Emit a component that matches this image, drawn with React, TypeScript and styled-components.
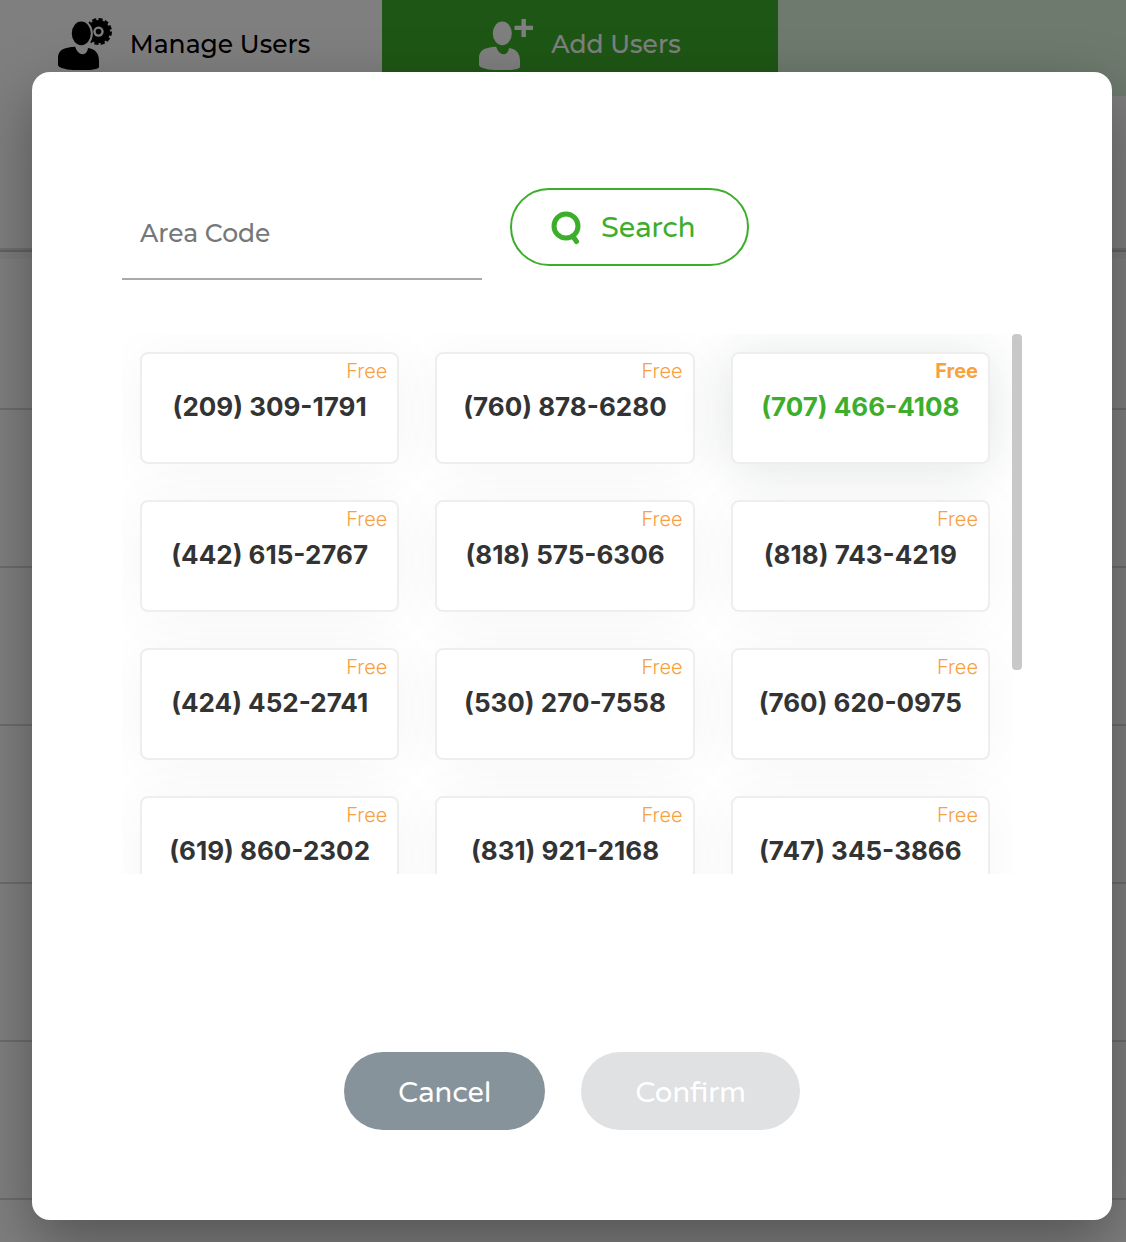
import React, { useState } from "react";
import styled, { createGlobalStyle } from "styled-components";

const GREEN = "#3dae2b";
const ORANGE = "#f9a03f";

const GlobalStyle = createGlobalStyle`
  *, *::before, *::after { box-sizing: border-box; }
  body {
    margin: 0;
    background: #fff;
    font-family: Montserrat, Inter, "Noto Sans", sans-serif;
  }
  button, input { font-family: inherit; }
`;

const Stage = styled.div`
  display: grid;
  min-height: 100vh;
  overflow: hidden;
  > * { grid-area: 1 / 1; min-width: 0; }
`;

const Page = styled.div`
  display: flex;
  flex-direction: column;
`;

const Nav = styled.nav`
  display: flex;
  height: 96px;
  margin-left: -14px;
  background: #dcf4dc;
`;

const Tab = styled.button<{ $active?: boolean }>`
  display: flex;
  align-items: center;
  justify-content: center;
  gap: 18px;
  flex: 0 0 396px;
  padding: 0 0 8px;
  border: 0;
  font-size: 25px;
  font-weight: 500;
  line-height: 32px;
  color: ${(p) => (p.$active ? "#fff" : "#000")};
  background: ${(p) => (p.$active ? GREEN : "#fff")};
`;

const TableHead = styled.div`
  height: 156px;
  border-bottom: 2px solid #c4c4c4;
  box-shadow: inset 0 -2px 0 #dedede, 0 7px 0 #f6f6f6;
`;

const TableRow = styled.div`
  height: 158px;
  border-bottom: 2px solid #d8d8d8;
`;

const Overlay = styled.div`
  z-index: 1;
  padding: 72px 14px 22px 32px;
  background: rgba(0, 0, 0, 0.5);
`;

const Dialog = styled.div`
  padding: 116px 90px 90px;
  border-radius: 18px;
  background: #fff;
  box-shadow: 0 22px 60px rgba(0, 0, 0, 0.34);
`;

const SearchForm = styled.form`
  display: flex;
  align-items: flex-start;
  gap: 28px;
  margin-bottom: 54px;
`;

const AreaInput = styled.input`
  width: 360px;
  height: 92px;
  padding: 0 18px;
  border: 0;
  border-bottom: 2px solid #a5abaf;
  outline: 0;
  background: transparent;
  font-size: 25px;
  font-weight: 500;
  color: #333;
  &::placeholder { color: #74787a; opacity: 1; }
`;

const PillButton = styled.button<{ $tone: "outline" | "slate" }>`
  display: flex;
  align-items: center;
  justify-content: center;
  gap: 20px;
  height: 78px;
  padding: 4px 54px 0;
  border: 0;
  border-radius: 39px;
  font-family: "Varela Round", Inter, "Noto Sans", sans-serif;
  font-size: 29px;
  font-weight: 600;
  line-height: 36px;
  color: #fff;
  background: #86939a;
  ${(p) =>
    p.$tone === "outline" &&
    `
    padding: 2px 52px 0 39px;
    border: 2px solid ${GREEN};
    color: ${GREEN};
    background: #fff;
  `}
  &:disabled { background: #dfe1e2; }
`;

const Picker = styled.div`
  display: flex;
  align-items: flex-start;
`;

const NumberGrid = styled.div`
  flex: 1;
  display: grid;
  grid-template-columns: repeat(3, 1fr);
  gap: 36px;
  max-height: 540px;
  padding: 18px 22px 18px 18px;
  overflow-y: auto;
  scrollbar-width: none;
`;

const ScrollThumb = styled.div`
  width: 10px;
  height: 336px;
  border-radius: 4px;
  background: #c8c8c8;
`;

const NumberCard = styled.button<{ $selected: boolean }>`
  display: flex;
  flex-direction: column;
  justify-content: flex-start;
  height: 112px;
  padding: 5px 0 0;
  border: 2px solid #eee;
  border-radius: 8px;
  background: #fff;
  font-family: Inter, "Noto Sans", sans-serif;
  color: ${(p) => (p.$selected ? GREEN : "#333")};
  box-shadow: ${(p) =>
    p.$selected
      ? "0 4px 50px rgba(30, 50, 45, 0.13)"
      : "0 4px 60px rgba(0, 0, 0, 0.04)"};
`;

const Price = styled.span<{ $selected: boolean }>`
  align-self: flex-end;
  padding-right: 10px;
  font-size: 20px;
  line-height: 24px;
  font-weight: ${(p) => (p.$selected ? 700 : 300)};
  color: ${ORANGE};
`;

const Phone = styled.span`
  align-self: center;
  font-size: 26px;
  line-height: 48px;
  font-weight: 700;
  white-space: nowrap;
`;

const Actions = styled.div`
  display: flex;
  justify-content: center;
  gap: 36px;
  margin-top: 178px;
`;

const Bust = () => (
  <>
    <ellipse cx="23.3" cy="15.4" rx="9.5" ry="11.8" />
    <path d="M17.2 28.8 C18.4 33.2 21.6 36.3 24.6 36.3 C27.6 36.3 29.6 33.6 30 30 C36.6 31 41 34.5 41 43 L41 48.5 C41 50 40 50.4 38 50.9 C29 52.8 12.5 52.8 4.5 50.2 C1.5 49.2 0 48.4 0 46.5 L0 40 C0 32 6 29.4 17.2 28.8 Z" />
  </>
);

const ManageIcon = () => (
  <svg width="54" height="52" viewBox="0 0 54 52" fill="currentColor" aria-hidden="true">
    <mask id="gear-cut" maskUnits="userSpaceOnUse" x="0" y="0" width="56" height="52">
      <rect width="56" height="52" fill="#fff" />
      <ellipse cx="23.3" cy="15.4" rx="11.5" ry="13.8" fill="#000" />
      <circle cx="40.5" cy="13.6" r="5.2" fill="#000" />
    </mask>
    <Bust />
    <g mask="url(#gear-cut)">
      <circle cx="40.5" cy="13.6" r="11.6" />
      <circle cx="40.5" cy="13.6" r="12.2" fill="none" stroke="currentColor" strokeWidth="2.6" pathLength="24" strokeDasharray="1.3 0.7" />
    </g>
    <circle cx="40.5" cy="13.6" r="2.8" />
  </svg>
);

const AddIcon = () => (
  <svg width="54" height="52" viewBox="0 0 54 52" fill="currentColor" aria-hidden="true">
    <Bust />
    <path d="M42.5 1h4.400v6.700H54v4.400h-7.100V19h-4.400v-6.900h-7V7.700h7z" />
  </svg>
);

const SearchIcon = () => (
  <svg width="30" height="34" viewBox="0 0 30 34" fill="none" stroke="currentColor" strokeWidth="5" strokeLinecap="round" aria-hidden="true">
    <circle cx="15" cy="15" r="12" />
    <path d="M22 25.500l3.500 5" />
  </svg>
);

const NUMBERS = [
  "(209) 309-1791", "(760) 878-6280", "(707) 466-4108",
  "(442) 615-2767", "(818) 575-6306", "(818) 743-4219",
  "(424) 452-2741", "(530) 270-7558", "(760) 620-0975",
  "(619) 860-2302", "(831) 921-2168", "(747) 345-3866",
];

export default function App() {
  const [selected, setSelected] = useState("(707) 466-4108");
  const [areaCode, setAreaCode] = useState("");

  return (
    <>
      <GlobalStyle />
      <Stage>
        <Page>
          <Nav>
            <Tab type="button"><ManageIcon />Manage Users</Tab>
            <Tab type="button" $active><AddIcon />Add Users</Tab>
          </Nav>
          <TableHead />
          {[0, 1, 2, 3, 4, 5].map((row) => <TableRow key={row} />)}
        </Page>
        <Overlay>
          <Dialog role="dialog" aria-modal="true" aria-label="Choose a number">
            <SearchForm onSubmit={(e) => e.preventDefault()}>
              <AreaInput
                aria-label="Area Code"
                placeholder="Area Code"
                value={areaCode}
                onChange={(e) => setAreaCode(e.target.value)}
              />
              <PillButton type="submit" $tone="outline"><SearchIcon />Search</PillButton>
            </SearchForm>
            <Picker>
              <NumberGrid>
                {NUMBERS.map((n) => (
                  <NumberCard
                    key={n}
                    type="button"
                    aria-pressed={n === selected}
                    $selected={n === selected}
                    onClick={() => setSelected(n)}
                  >
                    <Price $selected={n === selected}>Free</Price>
                    <Phone>{n}</Phone>
                  </NumberCard>
                ))}
              </NumberGrid>
              <ScrollThumb />
            </Picker>
            <Actions>
              <PillButton type="button" $tone="slate">Cancel</PillButton>
              <PillButton type="button" $tone="slate" disabled>Confirm</PillButton>
            </Actions>
          </Dialog>
        </Overlay>
      </Stage>
    </>
  );
}
